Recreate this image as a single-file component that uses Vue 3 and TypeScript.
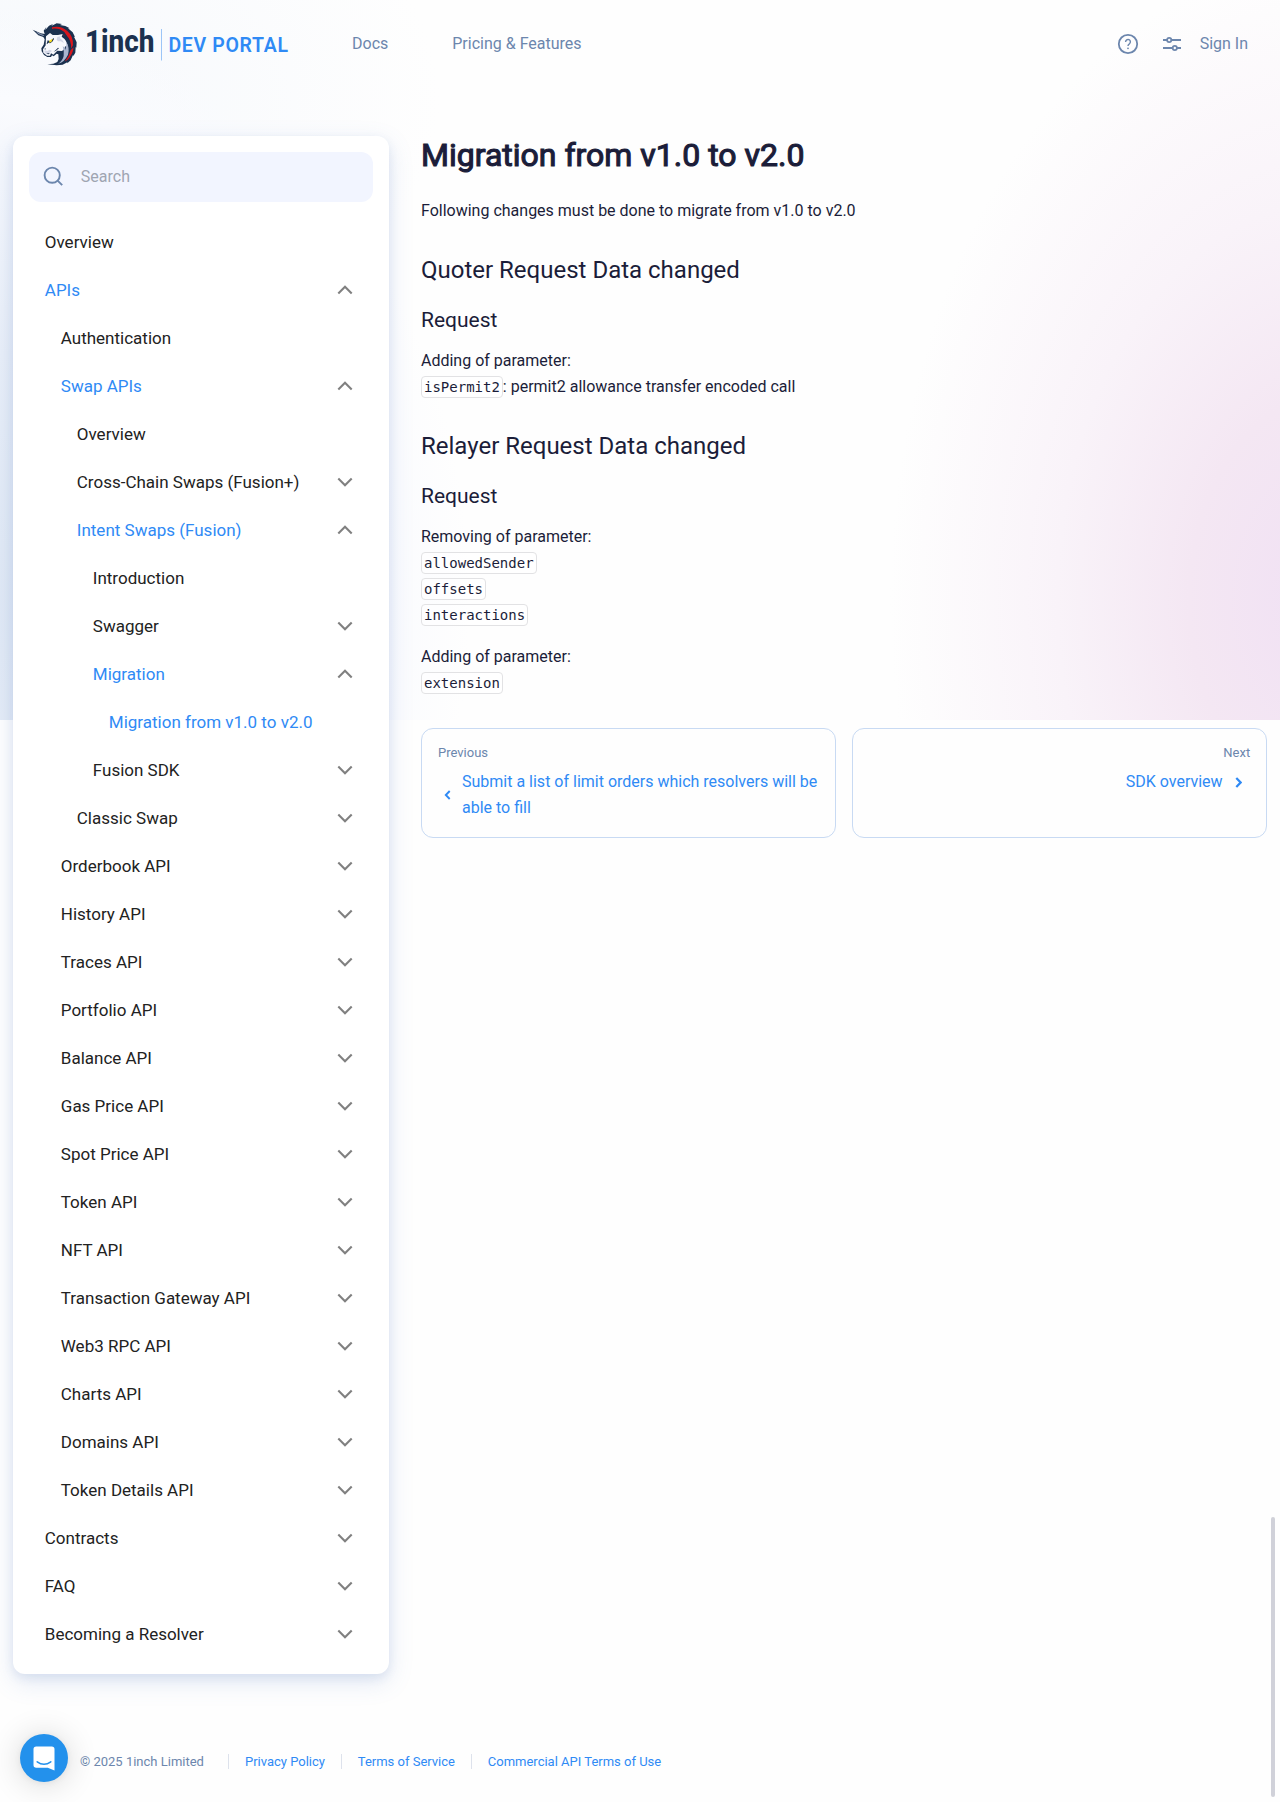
<script setup lang="ts">
interface NavItem {
  label: string
  depth: number
  state?: 'open' | 'closed'
  active?: boolean
}

const items: NavItem[] = [
  { label: 'Overview', depth: 0 },
  { label: 'APIs', depth: 0, state: 'open', active: true },
  { label: 'Authentication', depth: 1 },
  { label: 'Swap APIs', depth: 1, state: 'open', active: true },
  { label: 'Overview', depth: 2 },
  { label: 'Cross-Chain Swaps (Fusion+)', depth: 2, state: 'closed' },
  { label: 'Intent Swaps (Fusion)', depth: 2, state: 'open', active: true },
  { label: 'Introduction', depth: 3 },
  { label: 'Swagger', depth: 3, state: 'closed' },
  { label: 'Migration', depth: 3, state: 'open', active: true },
  { label: 'Migration from v1.0 to v2.0', depth: 4, active: true },
  { label: 'Fusion SDK', depth: 3, state: 'closed' },
  { label: 'Classic Swap', depth: 2, state: 'closed' },
  ...[
    'Orderbook API', 'History API', 'Traces API', 'Portfolio API', 'Balance API',
    'Gas Price API', 'Spot Price API', 'Token API', 'NFT API', 'Transaction Gateway API',
    'Web3 RPC API', 'Charts API', 'Domains API', 'Token Details API',
  ].map((label): NavItem => ({ label, depth: 1, state: 'closed' })),
  { label: 'Contracts', depth: 0, state: 'closed' },
  { label: 'FAQ', depth: 0, state: 'closed' },
  { label: 'Becoming a Resolver', depth: 0, state: 'closed' },
]

const legal = ['Privacy Policy', 'Terms of Service', 'Commercial API Terms of Use']
</script>

<template>
  <div class="page">
    <header class="header">
      <a class="logo">
        <svg class="unicorn" viewBox="0 0 180 168" width="60" height="56">
          <path fill="#1b314f" d="M14 44 L38 55 L50 57 L47 47 L55 36 L52 45 L63 32 L75 27 L70 33 L86 25 L102 27 L96 30 L112 33 L125 40 L120 40 L134 52 L141 66 L138 65 L146 82 L145 98 L143 96 L142 113 L136 123 L135 120 L128 136 L118 145 L118 142 L104 149 L86 151 L58 148 L76 146 L88 141 L92 132 L91 118 L86 116 L77 124 L72 121 L69 126 L58 126 L48 120 L41 109 L40 100 L47 89 L50 73 L46 66 L31 61 Z" />
          <path fill="#d9161c" d="M72 37 Q98 30 118 48 Q137 65 135 91 L129 101 Q131 74 113 59 L109 64 Q98 43 72 42 Z M128 105 L137 97 Q134 119 119 134 L111 139 Q124 124 128 105 Z" />
          <path fill="#1b314f" d="M73 41 Q94 39 109 51 L117 63 L125 86 Q116 65 99 54 Z" />
          <path fill="#f7f8fc" d="M54 64 L66 54 L74 60 L90 60 L104 57 L101 65 Q119 76 119 98 Q115 95 111 94 Q111 104 101 108 L88 107 L76 119 L69 115 L66 122 L57 122 L46 113 L45 103 L53 91 Z" />
          <path fill="#d3d7e7" d="M88 66 L98 64 L95 69 Q104 73 108 84 L98 79 L90 79 L86 74 Z M50 106 L58 108 L65 104 L72 108 L65 113 L62 118 L56 118 L49 112 Z" />
          <path fill="#a9b4ce" d="M104 94 Q110 95 112 104 Q117 90 115 80 Q126 99 120 119 Q109 142 90 146 Q104 138 107 123 Q109 108 104 94 Z" />
          <path fill="#1b314f" d="M59 76 L67 79 L73 73 L77 69 L78 72 L73 80 L66 85 L61 83 L57 88 L56 86 Z M90 98 L93 100 L84 107 L77 110 L84 104 Z M49 102 L53 99 L52 104 Z M55 115 L66 115 L61 118 Z" />
          <path fill="#ffe21a" d="M64 77 L74 71 L71 79 L64 84 Z" />
          <path fill="#8a98b3" d="M23 49 L39 57 L49 61 L46 63 L31 57 Z" />
        </svg>
        <svg class="wordmark" viewBox="0 0 204 40" width="204" height="40">
          <text x="-1" y="28.6" class="brand" textLength="69.5" lengthAdjust="spacingAndGlyphs">1inch</text>
          <rect x="75" y="6" width="1" height="31.5" fill="#9cc5f7" />
          <text x="82.4" y="28.8" class="portal" textLength="119.6" lengthAdjust="spacing">DEV PORTAL</text>
        </svg>
      </a>
      <nav class="topnav">
        <a>Docs</a>
        <a>Pricing &amp; Features</a>
      </nav>
      <div class="tools">
        <svg width="22" height="22" viewBox="0 0 22 22" fill="none" stroke="#6c86ad" stroke-width="1.8">
          <circle cx="11" cy="11" r="9.2" />
          <path d="M8.6 9 A2.4 2.4 0 1 1 12.4 10.8 Q11 11.7 11 13" stroke-width="1.4" />
          <circle cx="11" cy="15.3" r=".9" fill="#6c86ad" stroke="none" />
        </svg>
        <svg width="20" height="20" viewBox="0 0 20 20" fill="none" stroke="#6c86ad" stroke-width="1.8">
          <path d="M1 6 H5 M9.4 6 H19 M1 14 H10.6 M15 14 H19" />
          <circle cx="7.2" cy="6" r="2.1" /><circle cx="12.8" cy="14" r="2.1" />
        </svg>
        <a>Sign In</a>
      </div>
    </header>

    <div class="body">
      <aside class="sidebar">
        <div class="search">
          <svg width="22" height="22" viewBox="0 0 22 22" fill="none" stroke="#6c86ad" stroke-width="1.9">
            <circle cx="9.2" cy="9.2" r="7.6" /><path d="M14.6 14.6 L19.2 19.2" />
          </svg>
          <span>Search</span>
        </div>
        <ul class="tree">
          <li v-for="(item, i) in items" :key="i" :class="['d' + item.depth, { active: item.active }]">
            <span>{{ item.label }}</span>
            <svg v-if="item.state" width="16" height="10" viewBox="0 0 16 10" fill="none" stroke="#808080" stroke-width="2.1">
              <path :d="item.state === 'open' ? 'M1.3 8.4 L8 1.7 L14.7 8.4' : 'M1.3 1.6 L8 8.3 L14.7 1.6'" />
            </svg>
          </li>
        </ul>
      </aside>

      <main class="content">
        <h1>Migration from v1.0 to v2.0</h1>
        <p>Following changes must be done to migrate from v1.0 to v2.0</p>
        <h2>Quoter Request Data changed</h2>
        <h3>Request</h3>
        <p>Adding of parameter:<br><code>isPermit2</code>: permit2 allowance transfer encoded call</p>
        <h2>Relayer Request Data changed</h2>
        <h3>Request</h3>
        <p>Removing of parameter:<br><code>allowedSender</code><br><code>offsets</code><br><code>interactions</code></p>
        <p>Adding of parameter:<br><code>extension</code></p>
        <div class="pager">
          <a class="card">
            <small>Previous</small>
            <span class="link">
              <svg width="7" height="10" viewBox="0 0 7 10" fill="none" stroke="#2f8af5" stroke-width="1.9"><path d="M5.7 1 L1.8 5 L5.7 9" /></svg>
              <span>Submit a list of limit orders which resolvers will be able to fill</span>
            </span>
          </a>
          <a class="card next">
            <small>Next</small>
            <span class="link">
              <span>SDK overview</span>
              <svg width="7" height="11" viewBox="0 0 7 11" fill="none" stroke="#2f8af5" stroke-width="2.2"><path d="M1.3 1 L5.6 5.5 L1.3 10" /></svg>
            </span>
          </a>
        </div>
      </main>
    </div>

    <footer class="footer">
      <span class="copy">© 2025 1inch Limited</span>
      <a v-for="l in legal" :key="l">{{ l }}</a>
    </footer>

    <div class="chat">
      <svg width="22" height="25" viewBox="0 0 22 25">
        <path fill="#fff" d="M3.2 0.5 H18.8 Q21.5 .5 21.5 3.2 V24.5 L14.8 21.8 H3.2 Q.5 21.8 .5 19 V3.2 Q.5 .5 3.2 .5 Z" />
        <path fill="none" stroke="#2391ec" stroke-width="1.5" stroke-linecap="round" d="M4.2 15.8 Q11 20.8 17.8 15.8" />
      </svg>
    </div>
    <div class="scrollbar"></div>
  </div>
</template>

<style>
body {
  margin: 0;
  background: #fefefe;
}
</style>

<style scoped>
.page {
  position: relative;
  height: 1802px;
  overflow: hidden;
  box-sizing: border-box;
  font-family: Roboto, sans-serif;
  font-size: 16px;
  color: #1b1d39;
  background:
    radial-gradient(ellipse 440px 640px at 1330px 600px, #f0e0f4 0%, #f4e7f3 32%, #f9f3f9 62%, rgba(254, 254, 254, 0) 100%) no-repeat 0 0 / 100% 720px,
    radial-gradient(ellipse 510px 600px at -40px 600px, #dfe8f4 0%, #e9eff8 42%, #fafbfe 84%, rgba(254, 254, 254, 0) 100%) no-repeat 0 0 / 100% 720px,
    radial-gradient(ellipse 440px 280px at 0 100px, #f5f8fc 0%, rgba(254, 254, 254, 0) 100%) no-repeat 0 0 / 100% 720px,
    #fefefe;
}

.header {
  display: flex;
  align-items: center;
  height: 88px;
  padding: 0 32px 0 28px;
  box-sizing: border-box;
  color: #6c86ad;
}

.logo {
  display: flex;
  align-items: center;
  height: 56px;
  margin-top: -3px;
}

.wordmark {
  margin-left: -2px;
  overflow: visible;
}

.brand {
  font: 800 32px Roboto, sans-serif;
  fill: #1b314f;
}

.portal {
  font: 600 19.5px Roboto, sans-serif;
  fill: #2f8af5;
}

.topnav {
  display: flex;
  gap: 64px;
  margin: -2px 0 0 62px;
}

.tools {
  display: flex;
  align-items: center;
  margin-left: auto;
}

.tools a {
  margin-top: -2px;
}

.tools svg:nth-child(2) {
  margin: 0 18px 0 23px;
}

.body {
  display: flex;
  align-items: flex-start;
  gap: 32.2px;
  padding: 48px 12.8px 0;
}

.sidebar {
  width: 376px;
  flex: none;
  padding: 16px;
  box-sizing: border-box;
  border-radius: 12px;
  background: #fff;
  box-shadow: 0 8px 24px rgba(90, 130, 200, 0.18), 0 4px 10px rgba(90, 120, 180, 0.12);
}

.search {
  display: flex;
  align-items: center;
  gap: 16px;
  height: 50px;
  padding-left: 14px;
  border-radius: 12px;
  background: #f2f5ff;
  color: #9fa5b2;
}

.search span {
  margin-top: -2px;
}

.tree {
  list-style: none;
  margin: 16px 0 0;
  padding: 0;
}

.tree li {
  display: flex;
  align-items: center;
  justify-content: space-between;
  height: 48px;
  padding: 0 20px 0 16px;
  color: #222;
  font-size: 17px;
}

.tree .d1 { padding-left: 32px; }
.tree .d2 { padding-left: 48px; }
.tree .d3 { padding-left: 64px; }
.tree .d4 { padding-left: 80px; }

.tree .active {
  color: #2f8af5;
}

.content {
  flex: 1;
  line-height: 26px;
}

h1, h2, h3, p {
  margin: 0;
}

h1 {
  font-size: 32px;
  font-weight: 400;
  line-height: 38px;
  -webkit-text-stroke: 1.1px #1b1d39;
}

h1 + p {
  margin-top: 24px;
}

h2 {
  margin-top: 31px;
  font-size: 24px;
  font-weight: 400;
  line-height: 30px;
}

h3 {
  margin: 22px 0 15px;
  font-size: 21px;
  font-weight: 400;
  line-height: 26px;
}

p + p {
  margin-top: 16px;
}

code {
  padding: 2px;
  border: 1px solid #e2e2e4;
  border-radius: 4px;
  background: rgba(255, 255, 255, 0.5);
  font: 14px "DejaVu Sans Mono", monospace;
}

.pager {
  display: grid;
  grid-template-columns: 1fr 1fr;
  gap: 16px;
  margin-top: 32px;
}

.card {
  display: flex;
  flex-direction: column;
  height: 110px;
  padding: 14px 16px;
  box-sizing: border-box;
  border: 1px solid #c8daf3;
  border-radius: 12px;
  background: #fefefe;
  color: #2f8af5;
}

.card small {
  color: #6c86ad;
  font-size: 13px;
  line-height: 20px;
}

.link {
  display: flex;
  align-items: center;
  gap: 11px;
  padding: 6px 0 0 6px;
}

.link svg {
  flex: none;
}

.next {
  align-items: flex-end;
}

.next .link {
  gap: 12px;
  padding-right: 8.6px;
}

.footer {
  display: flex;
  align-items: center;
  height: 16px;
  margin: 79px 0 0 80px;
  font-size: 13px;
  color: #6c86ad;
}

.footer .copy {
  margin-right: 24px;
}

.footer a {
  padding: 0 15.8px 0 16px;
  border-left: 1px solid #dde2ec;
  color: #2f8af5;
}

.chat {
  position: absolute;
  left: 20px;
  top: 1734px;
  display: flex;
  align-items: center;
  justify-content: center;
  width: 48px;
  height: 48px;
  border-radius: 50%;
  background: #2391ec;
  box-shadow: 0 1px 6px rgba(0, 0, 0, 0.06), 0 2px 32px rgba(0, 0, 0, 0.16);
}

.scrollbar {
  position: absolute;
  left: 1271px;
  top: 1517px;
  width: 4px;
  height: 280px;
  border-radius: 2px;
  background: #d0d1d9;
}
</style>
